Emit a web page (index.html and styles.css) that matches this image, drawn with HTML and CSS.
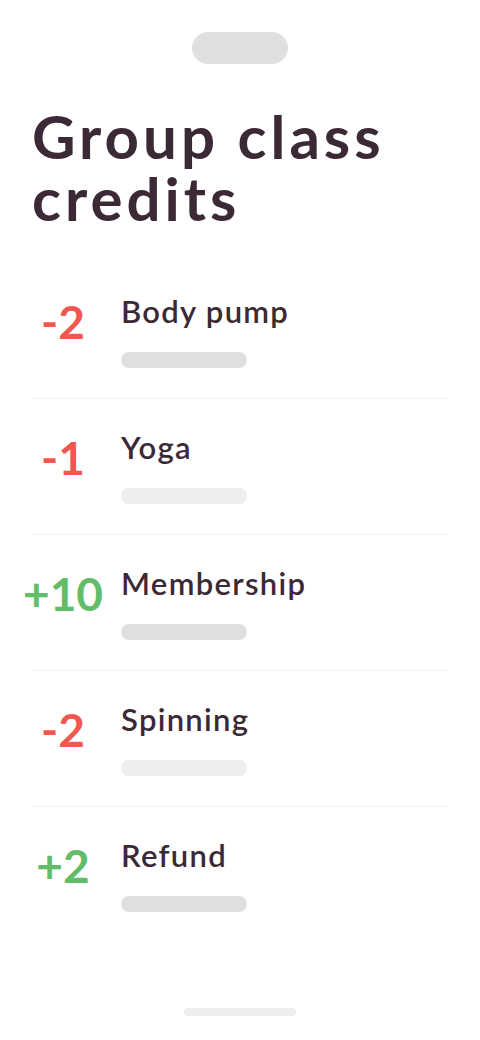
FILE: index.html
```html
<!DOCTYPE html>
<html lang="en">
<head>
  <meta charset="UTF-8">
  <meta name="viewport" content="width=device-width, initial-scale=1.0">
  <title>Group class credits</title>
  <link rel="stylesheet" href="styles.css">
</head>
<body>
<div class="screen">
  <div class="notch"></div>

  <h1>Group class credits</h1>

  <ul class="credit-list">
    <li class="credit-row">
      <span class="amount minus">-2</span>
      <div class="details">
        <div class="name">Body pump</div>
        <div class="bar"></div>
      </div>
    </li>
    <li class="credit-row">
      <span class="amount minus">-1</span>
      <div class="details">
        <div class="name">Yoga</div>
        <div class="bar light"></div>
      </div>
    </li>
    <li class="credit-row">
      <span class="amount plus">+10</span>
      <div class="details">
        <div class="name">Membership</div>
        <div class="bar"></div>
      </div>
    </li>
    <li class="credit-row">
      <span class="amount minus">-2</span>
      <div class="details">
        <div class="name">Spinning</div>
        <div class="bar light"></div>
      </div>
    </li>
    <li class="credit-row">
      <span class="amount plus">+2</span>
      <div class="details">
        <div class="name">Refund</div>
        <div class="bar"></div>
      </div>
    </li>
  </ul>

  <div class="home-indicator"></div>
</div>
</body>
</html>
```

FILE: styles.css
```css
body {
  margin: 0;
  padding: 0;
  background-color: #ffffff;
  font-family: Lato, "Open Sans", sans-serif;
  color: #3b2935;
}

.screen {
  display: flex;
  flex-direction: column;
  min-height: 100vh;
  padding: 32px 32px 24px;
  box-sizing: border-box;
}

.notch {
  width: 96px;
  height: 32px;
  margin: 0 auto;
  border-radius: 16px;
  background-color: #e0e0e0;
}

h1 {
  margin: 41px 0 0;
  font-size: 60px;
  line-height: 62px;
  font-weight: 700;
  letter-spacing: 4px;
}

.credit-list {
  list-style: none;
  margin: 34px 0 0;
  padding: 0;
}

.credit-row {
  display: flex;
  align-items: flex-start;
  padding: 30px 0;
  border-bottom: 1px solid #f2f2f2;
}

.credit-row:last-child {
  border-bottom: none;
}

/* centred so that wide values spill evenly on both sides */
.amount {
  display: flex;
  justify-content: center;
  flex-shrink: 0;
  width: 62px;
  margin: 6px 27px 0 0;
  font-size: 46px;
  line-height: 46px;
  font-weight: 700;
  white-space: nowrap;
}

.minus {
  color: #f1574f;
}

.plus {
  color: #62bc68;
}

.name {
  font-size: 31px;
  line-height: 36px;
  font-weight: 600;
  letter-spacing: 1.3px;
}

.bar {
  width: 126px;
  height: 16px;
  margin-top: 23px;
  border-radius: 8px;
  background-color: #e0e0e0;
}

.bar.light {
  background-color: #eeeeee;
}

.home-indicator {
  width: 112px;
  height: 8px;
  margin: auto auto 0;
  border-radius: 4px;
  background-color: #eeeeee;
}
```
